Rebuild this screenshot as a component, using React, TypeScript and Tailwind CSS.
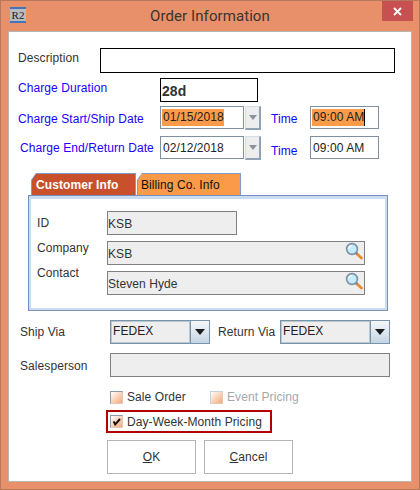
const font = "font-['Liberation_Sans',Arial,sans-serif] tracking-[0.08px]";

function Magnifier() {
  return (
    <svg width="18" height="18" viewBox="0 0 18 18" className="absolute right-[1px] top-[0px]">
      <line x1="11" y1="11" x2="16.4" y2="16" stroke="#ec8a2c" strokeWidth="2.8" strokeLinecap="round" />
      <line x1="10" y1="10" x2="12.2" y2="12.2" stroke="#80868e" strokeWidth="2.6" />
      <circle cx="7" cy="7" r="5.4" fill="#c4ecfc" stroke="#7d90a6" strokeWidth="1.6" />
      <path d="M3.8 6.8a3.2 3.2 0 0 1 3.2-3.2" stroke="#ffffff" strokeWidth="1.3" fill="none" />
    </svg>
  );
}

function Spinner() {
  return (
    <div className="ml-[1px] flex h-[24px] w-[16px] items-center justify-center border border-[#d5dde5] border-r-[2px] border-b-[2px] border-r-[#8fa3b5] border-b-[#8fa3b5] bg-[#eeeeee]">
      <div className="h-0 w-0 border-x-[4px] border-t-[5px] border-x-transparent border-t-[#8b9299]" />
    </div>
  );
}

function Combo({ width }: { width: string }) {
  return (
    <div className={`flex h-[24px] border border-[#7b93a8] ${width}`}>
      <div className="flex-1 border border-[#b8c7d4] bg-[#eeeeee] pl-[1px] text-[12px] leading-[18px] text-[#222]">FEDEX</div>
      <div className="flex w-[19px] items-center justify-center border-l border-[#7b93a8] bg-gradient-to-b from-[#f5f8fb] to-[#c5d5e4]">
        <div className="h-0 w-0 border-x-[5px] border-t-[6px] border-x-transparent border-t-[#1c1c1c]" />
      </div>
    </div>
  );
}

function Check({ checked, faded }: { checked?: boolean; faded?: boolean }) {
  return (
    <div className={`flex h-[13px] w-[13px] items-center justify-center border border-r-[#e3c9b5] border-b-[#e3c9b5] bg-gradient-to-br from-white to-[#f2a877] ${faded ? "border-[#c5d3e0]" : "border-[#8a9aa8]"}`}>
      {checked && (
        <svg width="9" height="9" viewBox="0 0 9 9">
          <path d="M1.6 4.4l1.6 3L8 2" stroke="#111" strokeWidth="2" fill="none" />
        </svg>
      )}
    </div>
  );
}

function GrayField({ text, width, search }: { text: string; width: string; search?: boolean }) {
  return (
    <div className={`relative h-[24px] border border-[#808080] bg-[#eeeeee] text-[12px] leading-[24px] text-[#333] ${width}`}>
      {text}
      {search && <Magnifier />}
    </div>
  );
}

function DateRow({ label, labelClass, date, time, selected, timeClass }: { label: string; labelClass: string; date: string; time: string; selected?: boolean; timeClass: string }) {
  return (
    <div className="flex h-[24px] items-start">
      <div className={`text-[12px] leading-[24px] text-[#1a00ff] ${labelClass}`}>{label}</div>
      <div className="flex h-[23px] w-[84px] items-center border border-[#7f90a0] pl-[1px] text-[12px] text-[#222]">
        <span className={selected ? "bg-[#fb9a48] pl-[1px] leading-[17px]" : "pl-[1px]"}>{date}</span>
      </div>
      <Spinner />
      <div className={`w-[39px] text-[12px] leading-[24px] text-[#1a00ff] ${timeClass}`}>Time</div>
      <div className="flex h-[23px] w-[69px] items-center border border-[#7f90a0] pl-[1px] text-[12px] text-[#222]">
        <span className={selected ? "border-r border-black bg-[#fb9a48] pl-[1px] leading-[17px]" : "pl-[1px]"}>{time}</span>
      </div>
    </div>
  );
}

export default function App() {
  return (
    <div className={`flex h-[490px] w-[420px] flex-col overflow-hidden border border-[#b57a5e] bg-[#e89069] ${font}`}>
      <div className="relative flex h-[30px] shrink-0 items-center justify-center">
        <div className="absolute left-[9px] top-[6px] flex h-[16px] w-[16px] items-center justify-center border-y-[2px] border-y-[#3f78b8] bg-[#b9bcc0] font-['Liberation_Serif',serif] text-[11px] leading-[12px] text-[#222]">R2</div>
        <div className="absolute right-[6px] top-0 flex h-[20px] w-[31px] items-center justify-center bg-[#c75050]">
          <svg width="9" height="9" viewBox="0 0 9 9">
            <path d="M1 1l7 7M8 1l-7 7" stroke="#fff" strokeWidth="1.8" />
          </svg>
        </div>
        <span className="font-['Roboto',sans-serif] text-[15px] text-[#3a3330]">Order Information</span>
      </div>

      <div className="mx-[7px] flex h-[451px] flex-col border border-[#b9b4b0] bg-white pl-[9px] pt-[16px]">
        <div className="flex items-start">
          <div className="w-[82px] text-[12px] leading-[20px] text-[#333]">Description</div>
          <div className="h-[25px] w-[295px] border border-black" />
        </div>

        <div className="mt-[5px] flex items-start">
          <div className="w-[142px] text-[12px] leading-[20px] text-[#1a00ff]">Charge Duration</div>
          <div className="h-[24px] w-[98px] border border-black pl-[1px] text-[14px] font-bold leading-[24px] text-[#333]">28d</div>
        </div>

        <div className="mt-[4px]">
          <DateRow label="Charge Start/Ship Date" labelClass="w-[142px] pt-[1px]" date="01/15/2018" time="09:00 AM" selected timeClass="ml-[10px] mt-[1px]" />
        </div>
        <div className="mt-[6px]">
          <DateRow label="Charge End/Return Date" labelClass="w-[140px] ml-[2px]" date="02/12/2018" time="09:00 AM" timeClass="ml-[10px] mt-[3px]" />
        </div>

        <div className="ml-[10px] mt-[13px]">
          <div className="flex h-[22px] pl-[3px]">
            <div className="h-[22px] w-[105px] bg-[#7f9ccb] pl-[1px] pt-[1px] [clip-path:polygon(5px_0,100%_0,100%_100%,0_100%,0_7px)]">
              <div className="h-[21px] w-[103px] bg-[#c8512c] pl-[4px] text-[12px] font-bold leading-[22px] text-white [clip-path:polygon(4px_0,100%_0,100%_100%,0_100%,0_6px)]">Customer Info</div>
            </div>
            <div className="ml-[1px] h-[22px] w-[104px] bg-[#7f9ccb] pl-[1px] pt-[1px] [clip-path:polygon(5px_0,100%_0,100%_100%,0_100%,0_7px)]">
              <div className="h-[21px] w-[102px] bg-[#fb9a48] pl-[3px] text-[12px] leading-[22px] text-[#111] [clip-path:polygon(4px_0,100%_0,100%_100%,0_100%,0_6px)]">Billing Co. Info</div>
            </div>
          </div>
          <div className="h-[116px] w-[360px] border border-[#7290c4] border-b-[#7f93ad] border-r-[#7f93ad]">
            <div className="flex h-full flex-col gap-[6px] border-[2px] border-t-[3px] border-[#c9dcf0] pl-[76px] pt-[12px]">
              <div className="relative">
                <span className="absolute left-[-70px] top-[3px] text-[12px] leading-[18px] text-[#333]">ID</span>
                <GrayField text="KSB" width="w-[130px]" />
              </div>
              <div className="relative">
                <span className="absolute left-[-70px] top-[-2px] text-[12px] leading-[18px] text-[#333]">Company</span>
                <GrayField text="KSB" width="w-[258px]" search />
              </div>
              <div className="relative">
                <span className="absolute left-[-70px] top-[-7px] text-[12px] leading-[18px] text-[#333]">Contact</span>
                <GrayField text="Steven Hyde" width="w-[258px]" search />
              </div>
            </div>
          </div>
        </div>

        <div className="mt-[9px] flex items-start text-[12px] text-[#333]">
          <div className="ml-[2px] w-[90px] leading-[24px]">Ship Via</div>
          <Combo width="w-[100px]" />
          <div className="ml-[8px] w-[62px] leading-[24px]">Return Via</div>
          <Combo width="w-[110px]" />
        </div>

        <div className="mt-[9px] flex items-start text-[12px] text-[#333]">
          <div className="ml-[2px] w-[90px] pt-[1px] leading-[24px]">Salesperson</div>
          <div className="h-[24px] w-[280px] border border-[#808080] bg-[#eeeeee]" />
        </div>

        <div className="ml-[92px] mt-[12px] flex items-center text-[12px] leading-[14px] text-[#333]">
          <Check />
          <span className="ml-[4px] w-[83px]">Sale Order</span>
          <Check faded />
          <span className="ml-[4px] text-[#a3a8ad]">Event Pricing</span>
        </div>

        <div className="ml-[88px] mt-[6px] flex h-[23px] w-[166px] items-center border-[2px] border-[#b00000] pl-[2px] text-[12px] text-[#333]">
          <Check checked />
          <span className="ml-[4px]">Day-Week-Month Pricing</span>
        </div>

        <div className="ml-[89px] mt-[7px] flex gap-[8px] text-[12px] text-[#333]">
          <div className="flex h-[34px] w-[89px] items-center justify-center border border-[#b5b5b5] bg-white"><span><span className="underline">O</span>K</span></div>
          <div className="flex h-[34px] w-[89px] items-center justify-center border border-[#b5b5b5] bg-white"><span><span className="underline">C</span>ancel</span></div>
        </div>
      </div>
    </div>
  );
}
